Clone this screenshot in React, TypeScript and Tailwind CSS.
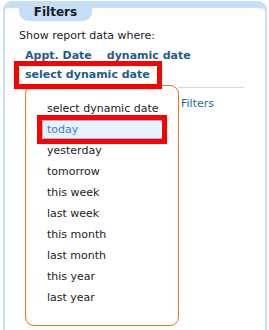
import React from "react";

const items = [
  "select dynamic date",
  "today",
  "yesterday",
  "tomorrow",
  "this week",
  "last week",
  "this month",
  "last month",
  "this year",
  "last year",
];

export default function App() {
  return (
    <div className="w-[269px] h-[330px] bg-white overflow-hidden font-['DejaVu_Sans',sans-serif] text-[11px]">
      <div className="ml-[3px] mr-[2px] mt-[1px] h-[345px] border-x-2 border-t-[7px] border-[#c6dff8] rounded-t-[9px]">
        <div className="-mt-[7px] ml-[14px] w-[73px] h-[20px] rounded-b-[9px] bg-[#c6dff8] flex items-center justify-center pt-[1px]">
          <span className="font-bold text-[12px] text-[#1a1a1a] leading-[14px]">Filters</span>
        </div>
        <div className="pl-[14px]">
          <div className="mt-[8px] leading-[14px] text-[#222]">Show report data where:</div>
          <div className="mt-[6px] ml-[6px] leading-[14px] font-bold text-[#1f5d89] flex gap-[15px]">
            <span>Appt. Date</span>
            <span>dynamic date</span>
          </div>
          <div className="mt-[5px] ml-[6px] relative w-fit z-10">
            <div className="leading-[14px] font-bold text-[#1f5d89]">select dynamic date</div>
            <div className="absolute left-[-11px] right-[-12px] top-[-7px] bottom-[-7px] border-[5px] border-[#ff0000]" />
          </div>
          <div className="flex ml-[6px] mt-[3px]">
            <div className="w-[154px] h-[241px] border border-[#e8761e] rounded-[9px] pt-[13px] pl-[16px] shrink-0">
              {items.map((it) => {
                const sel = it === "today";
                return (
                  <div
                    key={it}
                    className={
                      sel
                        ? "relative w-[121px] h-[19px] mb-[2px] pl-[4px] leading-[17px] border border-[#8db8e8] rounded-[2px] bg-[#e6f2fd] text-[#3f7fd6]"
                        : "relative w-[121px] h-[19px] mb-[2px] pl-[5px] leading-[19px] text-[#222]"
                    }
                  >
                    {it}
                    {sel && (
                      <div className="absolute left-[-6px] right-[-5px] top-[-6px] bottom-[-6px] border-[5px] border-[#ff0000]" />
                    )}
                  </div>
                );
              })}
            </div>
            <div className="w-[66px] -ml-[1px] mt-[2px] border-t border-[#d6d6d6] h-fit">
              <div className="pl-[3px] pt-[9px] leading-[14px] text-[#2c6a98]">Filters</div>
            </div>
          </div>
        </div>
      </div>
    </div>
  );
}
